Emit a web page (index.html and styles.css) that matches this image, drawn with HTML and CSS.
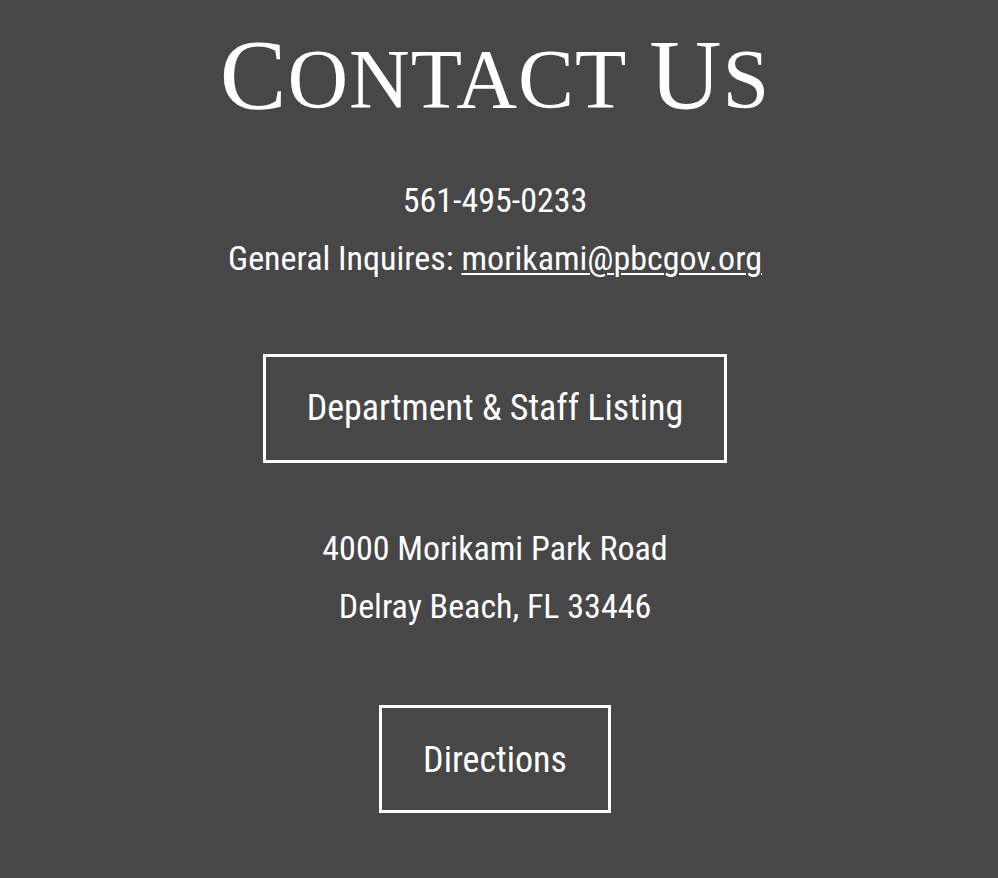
FILE: index.html
```html
<!DOCTYPE html>
<html>
<head>
<meta charset="utf-8">
<title>Contact Us</title>
<link rel="stylesheet" href="styles.css">
</head>
<body>
<main class="contact">
  <h1 class="title"><span class="cap">C</span><span class="sc">ontact</span> <span class="cap">U</span><span class="sc">s</span></h1>
  <div class="lines">
    <p class="line">561-495-0233</p>
    <p class="line">General Inquires: <a class="mail" href="#">morikami@pbcgov.org</a></p>
  </div>
  <a class="btn btn-staff" href="#">Department &amp; Staff Listing</a>
  <div class="lines address">
    <p class="line">4000 Morikami Park Road</p>
    <p class="line">Delray Beach, FL 33446</p>
  </div>
  <a class="btn btn-dir" href="#">Directions</a>
</main>
</body>
</html>
```
FILE: styles.css
```css
html, body {
  margin: 0;
  padding: 0;
  background: #474747;
}
body {
  width: 998px;
  height: 878px;
  overflow: hidden;
}
.contact {
  width: 990px;
  display: flex;
  flex-direction: column;
  align-items: center;
  color: #fff;
  font-family: "Roboto Condensed", Roboto, sans-serif;
  font-size: 34px;
}
.title {
  margin: 15px 0 0;
  font-family: "Liberation Serif", serif;
  font-weight: normal;
  line-height: 120px;
  height: 120px;
  text-transform: uppercase;
  letter-spacing: 1px;
  word-spacing: 4px;
  white-space: nowrap;
}
.cap {
  font-size: 100px;
}
.sc {
  font-size: 84px;
}
.lines {
  margin-top: 36px;
  text-align: center;
}
.line {
  margin: 0;
  line-height: 58px;
}
.mail {
  color: #fff;
  text-decoration: underline;
  text-underline-offset: 3px;
  text-decoration-thickness: 2px;
}
.btn {
  display: block;
  color: #fff;
  font-size: 36px;
  text-decoration: none;
  border: 3px solid #fff;
  padding: 22px 41px 23px;
  line-height: 58px;
  white-space: nowrap;
}
.btn-staff {
  margin-top: 67px;
}
.address {
  margin-top: 56px;
}
.btn-dir {
  margin-top: 70px;
  padding-top: 23px;
  padding-bottom: 21px;
}
```
